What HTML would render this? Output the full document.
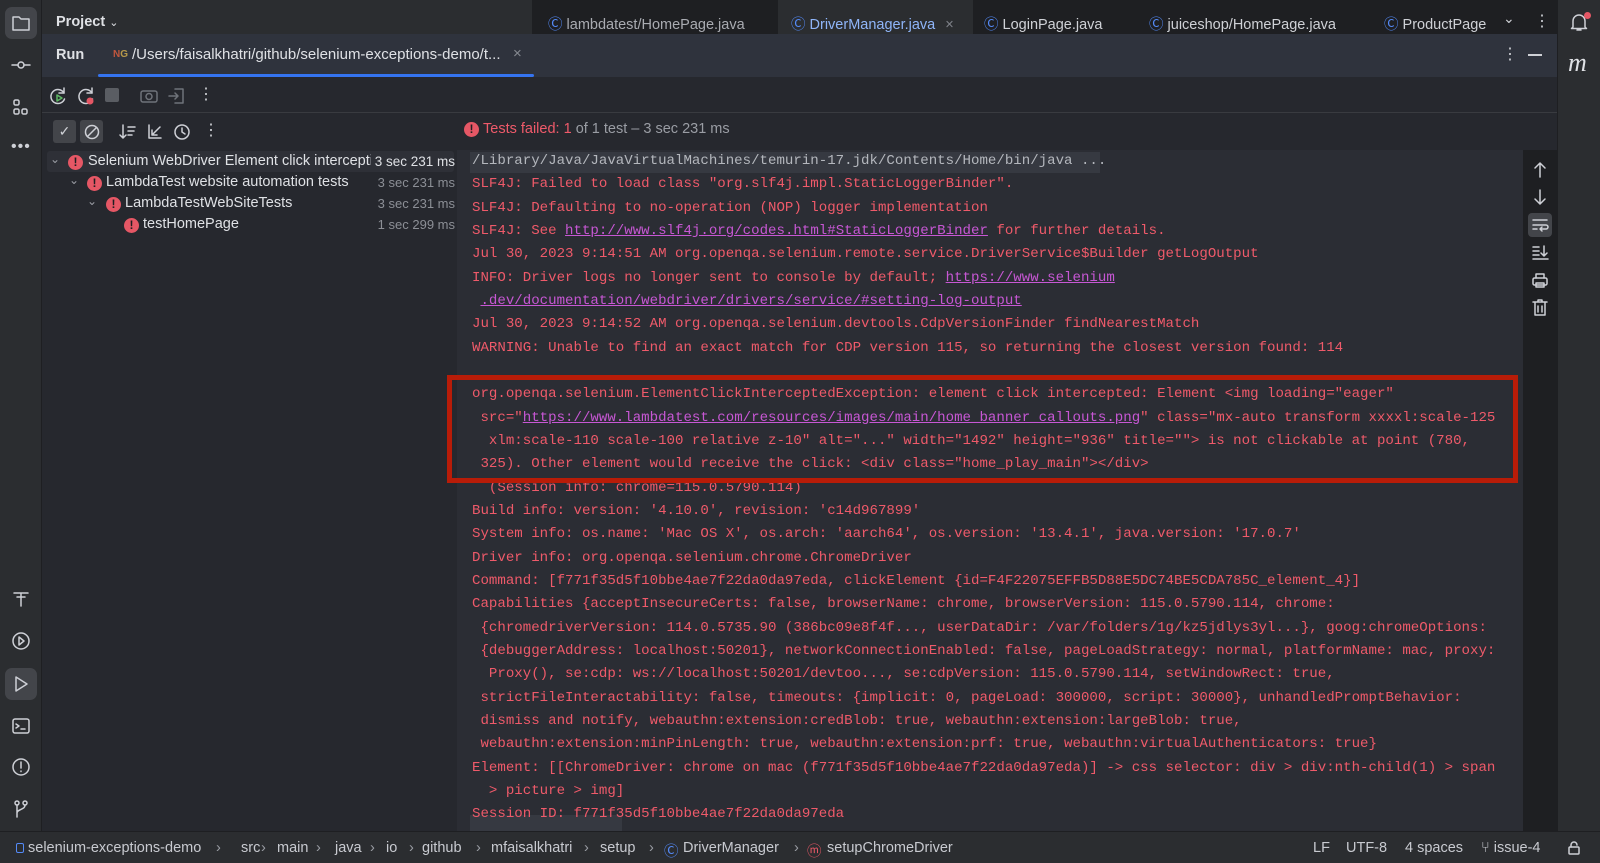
<!DOCTYPE html>
<html><head><meta charset="utf-8"><style>
*{margin:0;padding:0;box-sizing:border-box}
body{width:1600px;height:863px;background:#1e1f22;overflow:hidden;position:relative;font-family:"Liberation Sans",sans-serif;color:#dfe1e5;font-size:14px}
.a{position:absolute}
.ico{position:absolute;width:22px;height:22px;stroke:#ced0d6;fill:none;stroke-width:1.5;stroke-linecap:round;stroke-linejoin:round}
#con{position:absolute;left:457px;top:150px;width:1066px;height:681px;background:#2b2d34;overflow:hidden}
#con pre{font-family:"Liberation Mono",monospace;font-size:14.1px;line-height:23.33px;color:#ef5a6a;padding-left:15px;white-space:pre}
#con a{color:#c757d4;text-decoration:underline}
.t{font-size:14.5px;color:#dfe1e5}
.ms{color:#8c8f96;font-size:13px;right:1145px}
.err{position:absolute;width:15px;height:15px;border-radius:50%;background:#e55765;color:#1e1f22;font:bold 12px/15px "Liberation Sans",sans-serif;text-align:center}
.sb{position:absolute;top:840px;font-size:14.5px;color:#c8cad0}
.sp{position:absolute;top:840px;font-size:14.5px;color:#9a9da4}
</style></head><body>
<!-- left stripe -->
<div class="a" style="left:0;top:0;width:42px;height:833px;background:#2b2d30;border-right:1px solid #1e1f22"></div>
<div class="a" style="left:5px;top:7px;width:32px;height:32px;border-radius:7px;background:#43454a"></div>
<svg class="ico" style="left:10px;top:12px" viewBox="0 0 22 22"><path d="M3 5h6l2 2h8v11H3z"/></svg>
<svg class="ico" style="left:10px;top:54px" viewBox="0 0 22 22"><circle cx="11" cy="11" r="3"/><path d="M2 11h6M14 11h6"/></svg>
<svg class="ico" style="left:10px;top:97px" viewBox="0 0 22 22"><rect x="4" y="3" width="5" height="5" rx="1.5"/><rect x="4" y="12" width="5" height="5" rx="1.5"/><rect x="12" y="12" width="5" height="5" rx="1.5"/></svg>
<div class="a" style="left:11px;top:138px;font-size:16px;letter-spacing:1px;color:#ced0d6">•••</div>
<svg class="ico" style="left:10px;top:588px" viewBox="0 0 22 22"><path d="M4 5h14M11 5v13M7 9h8"/></svg>
<svg class="ico" style="left:10px;top:630px" viewBox="0 0 22 22"><circle cx="11" cy="11" r="8"/><path d="M9 7l5 4-5 4z"/></svg>
<div class="a" style="left:5px;top:668px;width:32px;height:32px;border-radius:7px;background:#43454a"></div>
<svg class="ico" style="left:10px;top:673px" viewBox="0 0 22 22"><path d="M6 4l11 7-11 7z"/></svg>
<svg class="ico" style="left:10px;top:715px" viewBox="0 0 22 22"><rect x="3" y="4" width="16" height="14" rx="2"/><path d="M6 9l3 2-3 2M11 14h4"/></svg>
<svg class="ico" style="left:10px;top:756px" viewBox="0 0 22 22"><circle cx="11" cy="11" r="8"/><path d="M11 6v6M11 15v.5"/></svg>
<svg class="ico" style="left:10px;top:798px" viewBox="0 0 22 22"><circle cx="7" cy="5" r="2"/><circle cx="15" cy="5" r="2"/><path d="M7 7v12M15 7c0 5-8 4-8 8"/></svg>

<!-- top row -->
<div class="a" style="left:42px;top:0;width:490px;height:34px;background:#2b2d30"></div>
<div class="a" style="left:56px;top:14px;font-size:14.5px;font-weight:bold;color:#dfe1e5">Project <span style="font-weight:normal;font-size:11px">&#8964;</span></div>
<div class="a" style="left:532px;top:0;width:1025px;height:34px;background:#1e1f22"></div>
<div class="a" style="left:778px;top:0;width:195px;height:34px;background:#2b2d30"></div>
<div class="a" style="left:548px;top:13px;font-size:14.5px;color:#a9abb1"><span style="color:#548af7">Ⓒ</span> lambdatest/HomePage.java</div>
<div class="a" style="left:791px;top:13px;font-size:14.5px;color:#8fb5f9"><span style="color:#548af7">Ⓒ</span> DriverManager.java <span style="color:#80838a;margin-left:6px">×</span></div>
<div class="a" style="left:984px;top:13px;font-size:14.5px;color:#cfd1d6"><span style="color:#548af7">Ⓒ</span> LoginPage.java</div>
<div class="a" style="left:1149px;top:13px;font-size:14.5px;color:#cfd1d6"><span style="color:#548af7">Ⓒ</span> juiceshop/HomePage.java</div>
<div class="a" style="left:1384px;top:13px;font-size:14.5px;color:#cfd1d6"><span style="color:#548af7">Ⓒ</span> ProductPage</div>
<div class="a" style="left:1503px;top:10px;font-size:14px;color:#cfd1d6">&#8964;</div>
<div class="a" style="left:1534px;top:11px;font-size:16px;color:#cfd1d6">⋮</div>
<!-- right stripe -->
<div class="a" style="left:1557px;top:0;width:43px;height:833px;background:#2b2d30;border-left:1px solid #1e1f22"></div>
<svg class="ico" style="left:1568px;top:11px" viewBox="0 0 22 22"><path d="M5 16V10a6 6 0 0112 0v6l1.5 1.5h-15zM9 19h4"/></svg>
<div class="a" style="left:1584px;top:12px;width:7px;height:7px;border-radius:50%;background:#e55765"></div>
<div class="a" style="left:1568px;top:48px;font:italic 26px 'Liberation Serif',serif;color:#dfe1e5">m</div>

<!-- run header -->
<div class="a" style="left:42px;top:34px;width:1515px;height:43px;background:#2f333d"></div>
<div class="a" style="left:56px;top:47px;font-size:14.5px;font-weight:bold">Run</div>
<div class="a" style="left:113px;top:49px;font-size:10px;color:#c0563d;font-weight:bold">N<span style="color:#b89a4a">G</span></div>
<div class="a" style="left:132px;top:46px;font-size:15px;color:#dfe1e5">/Users/faisalkhatri/github/selenium-exceptions-demo/t...</div>
<div class="a" style="left:513px;top:45px;font-size:15px;color:#868a91">×</div>
<div class="a" style="left:98px;top:74px;width:436px;height:3px;background:#3574f0;border-radius:2px"></div>
<div class="a" style="left:1502px;top:44px;font-size:16px;color:#cfd1d6">⋮</div>
<div class="a" style="left:1528px;top:54px;width:14px;height:1.5px;background:#cfd1d6"></div>

<!-- toolbar -->
<div class="a" style="left:42px;top:77px;width:1515px;height:36px;background:#26282e;border-bottom:1px solid #393b40"></div>
<svg class="ico" style="left:47px;top:85px" viewBox="0 0 22 22"><path d="M17 8a7 7 0 10.5 6"/><path d="M17 3v5h-5"/><path d="M10 10l5 3-5 3z" stroke="#5fb865"/></svg>
<svg class="ico" style="left:75px;top:85px" viewBox="0 0 22 22"><path d="M17 8a7 7 0 10.5 6"/><path d="M17 3v5h-5"/><circle cx="15" cy="16" r="3.5" fill="#e55765" stroke="none"/></svg>
<div class="a" style="left:105px;top:88px;width:14px;height:14px;background:#5a5d63;border-radius:2px"></div>
<svg class="ico" style="left:138px;top:85px;stroke:#6f737a" viewBox="0 0 22 22"><rect x="3" y="6" width="16" height="11" rx="2"/><circle cx="11" cy="11.5" r="3"/></svg>
<svg class="ico" style="left:166px;top:85px;stroke:#6f737a" viewBox="0 0 22 22"><path d="M9 4h8v14H9M3 11h9M9 8l3 3-3 3"/></svg>
<div class="a" style="left:198px;top:84px;font-size:16px;color:#cfd1d6">⋮</div>
<!-- second toolbar -->
<div class="a" style="left:42px;top:113px;width:1515px;height:37px;background:#26282e"></div>
<div class="a" style="left:53px;top:120px;width:23px;height:23px;background:#43454a;border-radius:3px;color:#cfd1d6;text-align:center;line-height:23px">✓</div>
<div class="a" style="left:80px;top:120px;width:23px;height:23px;background:#43454a;border-radius:3px"></div>
<svg class="ico" style="left:81px;top:121px" viewBox="0 0 22 22"><circle cx="11" cy="11" r="6.5"/><path d="M6.5 15.5l9-9"/></svg>
<svg class="ico" style="left:117px;top:121px" viewBox="0 0 22 22"><path d="M6 4v13M3 14l3 3 3-3M11 6h7M11 10h6M11 14h4"/></svg>
<svg class="ico" style="left:144px;top:121px" viewBox="0 0 22 22"><path d="M5 4v13h12M16 6l-8 8M8 9v5h5"/></svg>
<svg class="ico" style="left:171px;top:121px" viewBox="0 0 22 22"><circle cx="11" cy="11" r="7"/><path d="M11 7v4l3 2"/></svg>
<div class="a" style="left:203px;top:120px;font-size:16px;color:#cfd1d6">⋮</div>
<div class="err" style="left:464px;top:122px">!</div>
<div class="a" style="left:483px;top:121px;font-size:14.5px;color:#ef5a6a">Tests failed: 1 <span style="color:#9a9da4">of 1 test – 3 sec 231 ms</span></div>

<!-- tree -->
<div class="a" style="left:42px;top:150px;width:415px;height:681px;background:#26282e"></div>
<div class="a" style="left:47px;top:151px;width:407px;height:21px;background:#2e3037;border-radius:3px"></div>
<div class="a" style="left:50px;top:152px;font-size:12px;color:#9a9da4">&#8964;</div>
<div class="err" style="left:68px;top:155px">!</div>
<div class="a" style="left:88px;top:153px;width:283px;overflow:hidden;white-space:nowrap;font-size:14.5px">Selenium WebDriver Element click intercepti</div>
<div class="a" style="right:1145px;top:154px;font-size:13.5px;color:#dfe1e5">3 sec 231 ms</div>
<div class="a" style="left:69px;top:173px;font-size:12px;color:#9a9da4">&#8964;</div>
<div class="err" style="left:87px;top:176px">!</div>
<div class="a t" style="left:106px;top:174px">LambdaTest website automation tests</div>
<div class="a ms" style="top:175px">3 sec 231 ms</div>
<div class="a" style="left:87px;top:194px;font-size:12px;color:#9a9da4">&#8964;</div>
<div class="err" style="left:106px;top:197px">!</div>
<div class="a t" style="left:125px;top:195px">LambdaTestWebSiteTests</div>
<div class="a ms" style="top:196px">3 sec 231 ms</div>
<div class="err" style="left:124px;top:218px">!</div>
<div class="a t" style="left:143px;top:216px">testHomePage</div>
<div class="a ms" style="top:217px">1 sec 299 ms</div>

<!-- console -->
<div id="con">
<div class="a" style="left:13px;top:2px;width:630px;height:21px;background:#363941"></div>
<div class="a" style="left:13px;top:665px;width:152px;height:21px;background:#363941"></div>
<pre style="position:relative"><span style="color:#b4b7bd">/Library/Java/JavaVirtualMachines/temurin-17.jdk/Contents/Home/bin/java ...</span>
SLF4J: Failed to load class "org.slf4j.impl.StaticLoggerBinder".
SLF4J: Defaulting to no-operation (NOP) logger implementation
SLF4J: See <a>http://www.slf4j.org/codes.html#StaticLoggerBinder</a> for further details.
Jul 30, 2023 9:14:51 AM org.openqa.selenium.remote.service.DriverService$Builder getLogOutput
INFO: Driver logs no longer sent to console by default; <a>https://www.selenium</a>
 <a>.dev/documentation/webdriver/drivers/service/#setting-log-output</a>
Jul 30, 2023 9:14:52 AM org.openqa.selenium.devtools.CdpVersionFinder findNearestMatch
WARNING: Unable to find an exact match for CDP version 115, so returning the closest version found: 114

org.openqa.selenium.ElementClickInterceptedException: element click intercepted: Element &lt;img loading="eager"
 src="<a>https://www.lambdatest.com/resources/images/main/home_banner_callouts.png</a>" class="mx-auto transform xxxxl:scale-125
  xlm:scale-110 scale-100 relative z-10" alt="..." width="1492" height="936" title=""&gt; is not clickable at point (780,
 325). Other element would receive the click: &lt;div class="home_play_main"&gt;&lt;/div&gt;
  (Session info: chrome=115.0.5790.114)
Build info: version: '4.10.0', revision: 'c14d967899'
System info: os.name: 'Mac OS X', os.arch: 'aarch64', os.version: '13.4.1', java.version: '17.0.7'
Driver info: org.openqa.selenium.chrome.ChromeDriver
Command: [f771f35d5f10bbe4ae7f22da0da97eda, clickElement {id=F4F22075EFFB5D88E5DC74BE5CDA785C_element_4}]
Capabilities {acceptInsecureCerts: false, browserName: chrome, browserVersion: 115.0.5790.114, chrome:
 {chromedriverVersion: 114.0.5735.90 (386bc09e8f4f..., userDataDir: /var/folders/1g/kz5jdlys3yl...}, goog:chromeOptions:
 {debuggerAddress: localhost:50201}, networkConnectionEnabled: false, pageLoadStrategy: normal, platformName: mac, proxy:
  Proxy(), se:cdp: ws://localhost:50201/devtoo..., se:cdpVersion: 115.0.5790.114, setWindowRect: true,
 strictFileInteractability: false, timeouts: {implicit: 0, pageLoad: 300000, script: 30000}, unhandledPromptBehavior:
 dismiss and notify, webauthn:extension:credBlob: true, webauthn:extension:largeBlob: true,
 webauthn:extension:minPinLength: true, webauthn:extension:prf: true, webauthn:virtualAuthenticators: true}
Element: [[ChromeDriver: chrome on mac (f771f35d5f10bbe4ae7f22da0da97eda)] -&gt; css selector: div &gt; div:nth-child(1) &gt; span
  &gt; picture &gt; img]
Session ID: f771f35d5f10bbe4ae7f22da0da97eda
<span style="color:#6f737a">  Driver info</span></pre>
</div>
<div class="a" style="left:447px;top:375px;width:1071px;height:108px;border:5px solid #b81c08"></div>
<!-- console side icons -->
<svg class="ico" style="left:1529px;top:159px" viewBox="0 0 22 22"><path d="M11 18V4M6 9l5-5 5 5"/></svg>
<svg class="ico" style="left:1529px;top:186px" viewBox="0 0 22 22"><path d="M11 4v14M6 13l5 5 5-5"/></svg>
<div class="a" style="left:1528px;top:213px;width:24px;height:24px;background:#43454a;border-radius:4px"></div>
<svg class="ico" style="left:1529px;top:214px" viewBox="0 0 22 22"><path d="M4 6h14M4 11h13a2 2 0 010 4h-5M13 13l-2 2 2 2M4 15h4"/></svg>
<svg class="ico" style="left:1529px;top:241px" viewBox="0 0 22 22"><path d="M4 6h6M4 10h6M4 14h6M4 18h15M15 5v10M12 12l3 3 3-3"/></svg>
<svg class="ico" style="left:1529px;top:269px" viewBox="0 0 22 22"><rect x="4" y="9" width="14" height="7" rx="1.5"/><path d="M7 9V5h8v4M7 14h8v4H7z"/></svg>
<svg class="ico" style="left:1529px;top:296px" viewBox="0 0 22 22"><path d="M4 6h14M9 6V4h4v2M6 6v13h10V6M9 10v6M13 10v6"/></svg>

<!-- status bar -->
<div class="a" style="left:0;top:831px;width:1600px;height:32px;background:#2b2d30;border-top:1px solid #1e1f22"></div>
<div class="a" style="left:16px;top:843px;width:8px;height:10px;border:1.5px solid #548af7;border-radius:2px"></div>
<div class="sb" style="left:28px">selenium-exceptions-demo</div>
<div class="sp" style="left:216px">›</div>
<div class="sb" style="left:241px">src</div>
<div class="sp" style="left:261px">›</div>
<div class="sb" style="left:277px">main</div>
<div class="sp" style="left:316px">›</div>
<div class="sb" style="left:335px">java</div>
<div class="sp" style="left:370px">›</div>
<div class="sb" style="left:386px">io</div>
<div class="sp" style="left:409px">›</div>
<div class="sb" style="left:422px">github</div>
<div class="sp" style="left:476px">›</div>
<div class="sb" style="left:491px">mfaisalkhatri</div>
<div class="sp" style="left:584px">›</div>
<div class="sb" style="left:600px">setup</div>
<div class="sp" style="left:649px">›</div>
<div class="sb" style="left:664px;color:#548af7">Ⓒ</div>
<div class="sb" style="left:683px">DriverManager</div>
<div class="sp" style="left:794px">›</div>
<div class="sb" style="left:807px;color:#e55765">ⓜ</div>
<div class="sb" style="left:827px">setupChromeDriver</div>
<div class="sb" style="left:1313px">LF</div>
<div class="sb" style="left:1346px">UTF-8</div>
<div class="sb" style="left:1405px">4 spaces</div>
<div class="sb" style="left:1481px">⑂ issue-4</div>
<svg class="ico" style="left:1566px;top:840px;width:16px;height:16px" viewBox="0 0 16 16"><rect x="3" y="7" width="10" height="7" rx="1"/><path d="M5 7V5a3 3 0 016 0"/></svg>
</body></html>
